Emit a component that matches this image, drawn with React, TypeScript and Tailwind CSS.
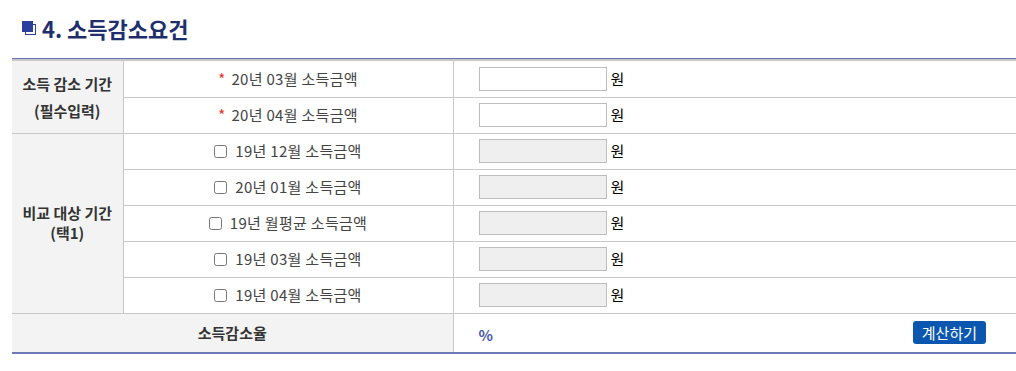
import React from 'react';

const font = { fontFamily: '"Noto Sans CJK KR", "Noto Sans", sans-serif' };

type Row = { label: string; required?: boolean; disabled?: boolean };

const required: Row[] = [
    { label: '20년 03월 소득금액', required: true },
    { label: '20년 04월 소득금액', required: true },
];

const compare: Row[] = [
    { label: '19년 12월 소득금액', disabled: true },
    { label: '20년 01월 소득금액', disabled: true },
    { label: '19년 월평균 소득금액', disabled: true },
    { label: '19년 03월 소득금액', disabled: true },
    { label: '19년 04월 소득금액', disabled: true },
];

function AmountCell({ disabled }: { disabled?: boolean }) {
    return (
        <td className="border-b border-[#c8c8c8] pl-[25px] h-[36px] p-0">
            <div className="flex items-center gap-[4px]">
                <input
                    type="text"
                    disabled={disabled}
                    className={`w-[128px] h-[24px] border border-[#bdbdbd] outline-none ${disabled ? 'bg-[#efefef]' : 'bg-white'}`}
                />
                <span className="text-[15px] text-black">원</span>
            </div>
        </td>
    );
}

function LabelCell({ row }: { row: Row }) {
    return (
        <td className="border-b border-r border-[#c8c8c8] text-center text-[15px] tracking-[0.3px] text-[#444] h-[36px] p-0">
            <div className="flex items-center justify-center gap-[8px]">
                {row.required ? (
                    <span className="text-[#e8321f] -mr-[2px]">*</span>
                ) : (
                    <input type="checkbox" className="w-[13px] h-[13px] m-0" />
                )}
                <span>{row.label}</span>
            </div>
        </td>
    );
}

export default function App() {
    return (
        <div className="w-[1016px] h-[371px] bg-white" style={font}>
            {/* Section Title */}
            <div className="flex items-center h-[58px] pl-[22px] pb-[2px]">
                <div className="relative w-[15px] h-[15px] mr-[5px]">
                    <div className="absolute left-[3px] top-[3px] w-[11px] h-[11px] border border-[#2b3f9e] bg-white"></div>
                    <div className="absolute left-0 top-0 w-[11px] h-[11px] bg-[#2b3f9e]"></div>
                </div>
                <h2 className="text-[22px] font-semibold text-[#1f2f6e]">4. 소득감소요건</h2>
            </div>

            {/* Requirement Table */}
            <div className="ml-[12px] border-t border-[#6870b6] border-b-2 border-b-[#7078b8]">
                <div className="h-[2px] bg-[#c8c8c8]"></div>
                <table className="w-full border-collapse">
                    <colgroup>
                        <col className="w-[111px]" />
                        <col className="w-[330px]" />
                        <col />
                    </colgroup>
                    <tbody>
                        {required.map((row, i) => (
                            <tr key={row.label}>
                                {i === 0 && (
                                    <th rowSpan={2} className="bg-[#f3f3f3] border-b border-r border-[#c8c8c8] text-[15px] font-semibold text-[#333] leading-[27px] p-0">
                                        소득 감소 기간
                                        <br />
                                        (필수입력)
                                    </th>
                                )}
                                <LabelCell row={row} />
                                <AmountCell disabled={row.disabled} />
                            </tr>
                        ))}
                        {compare.map((row, i) => (
                            <tr key={row.label}>
                                {i === 0 && (
                                    <th rowSpan={5} className="bg-[#f3f3f3] border-b border-r border-[#c8c8c8] text-[15px] font-semibold text-[#333] leading-[20px] p-0">
                                        비교 대상 기간
                                        <br />
                                        (택1)
                                    </th>
                                )}
                                <LabelCell row={row} />
                                <AmountCell disabled={row.disabled} />
                            </tr>
                        ))}
                        <tr>
                            <th colSpan={2} className="bg-[#f3f3f3] border-r border-[#c8c8c8] h-[39px] text-[15px] font-semibold text-[#333] p-0">
                                소득감소율
                            </th>
                            <td className="pl-[25px] pr-[30px]">
                                <div className="flex items-center justify-between">
                                    <span className="text-[15px] font-semibold text-[#4b5aa8] mt-[4px]">%</span>
                                    <button className="h-[23px] px-[9px] rounded-[3px] bg-[#0b57b0] text-white text-[15px] leading-[23px]">
                                        계산하기
                                    </button>
                                </div>
                            </td>
                        </tr>
                    </tbody>
                </table>
            </div>
        </div>
    );
}
